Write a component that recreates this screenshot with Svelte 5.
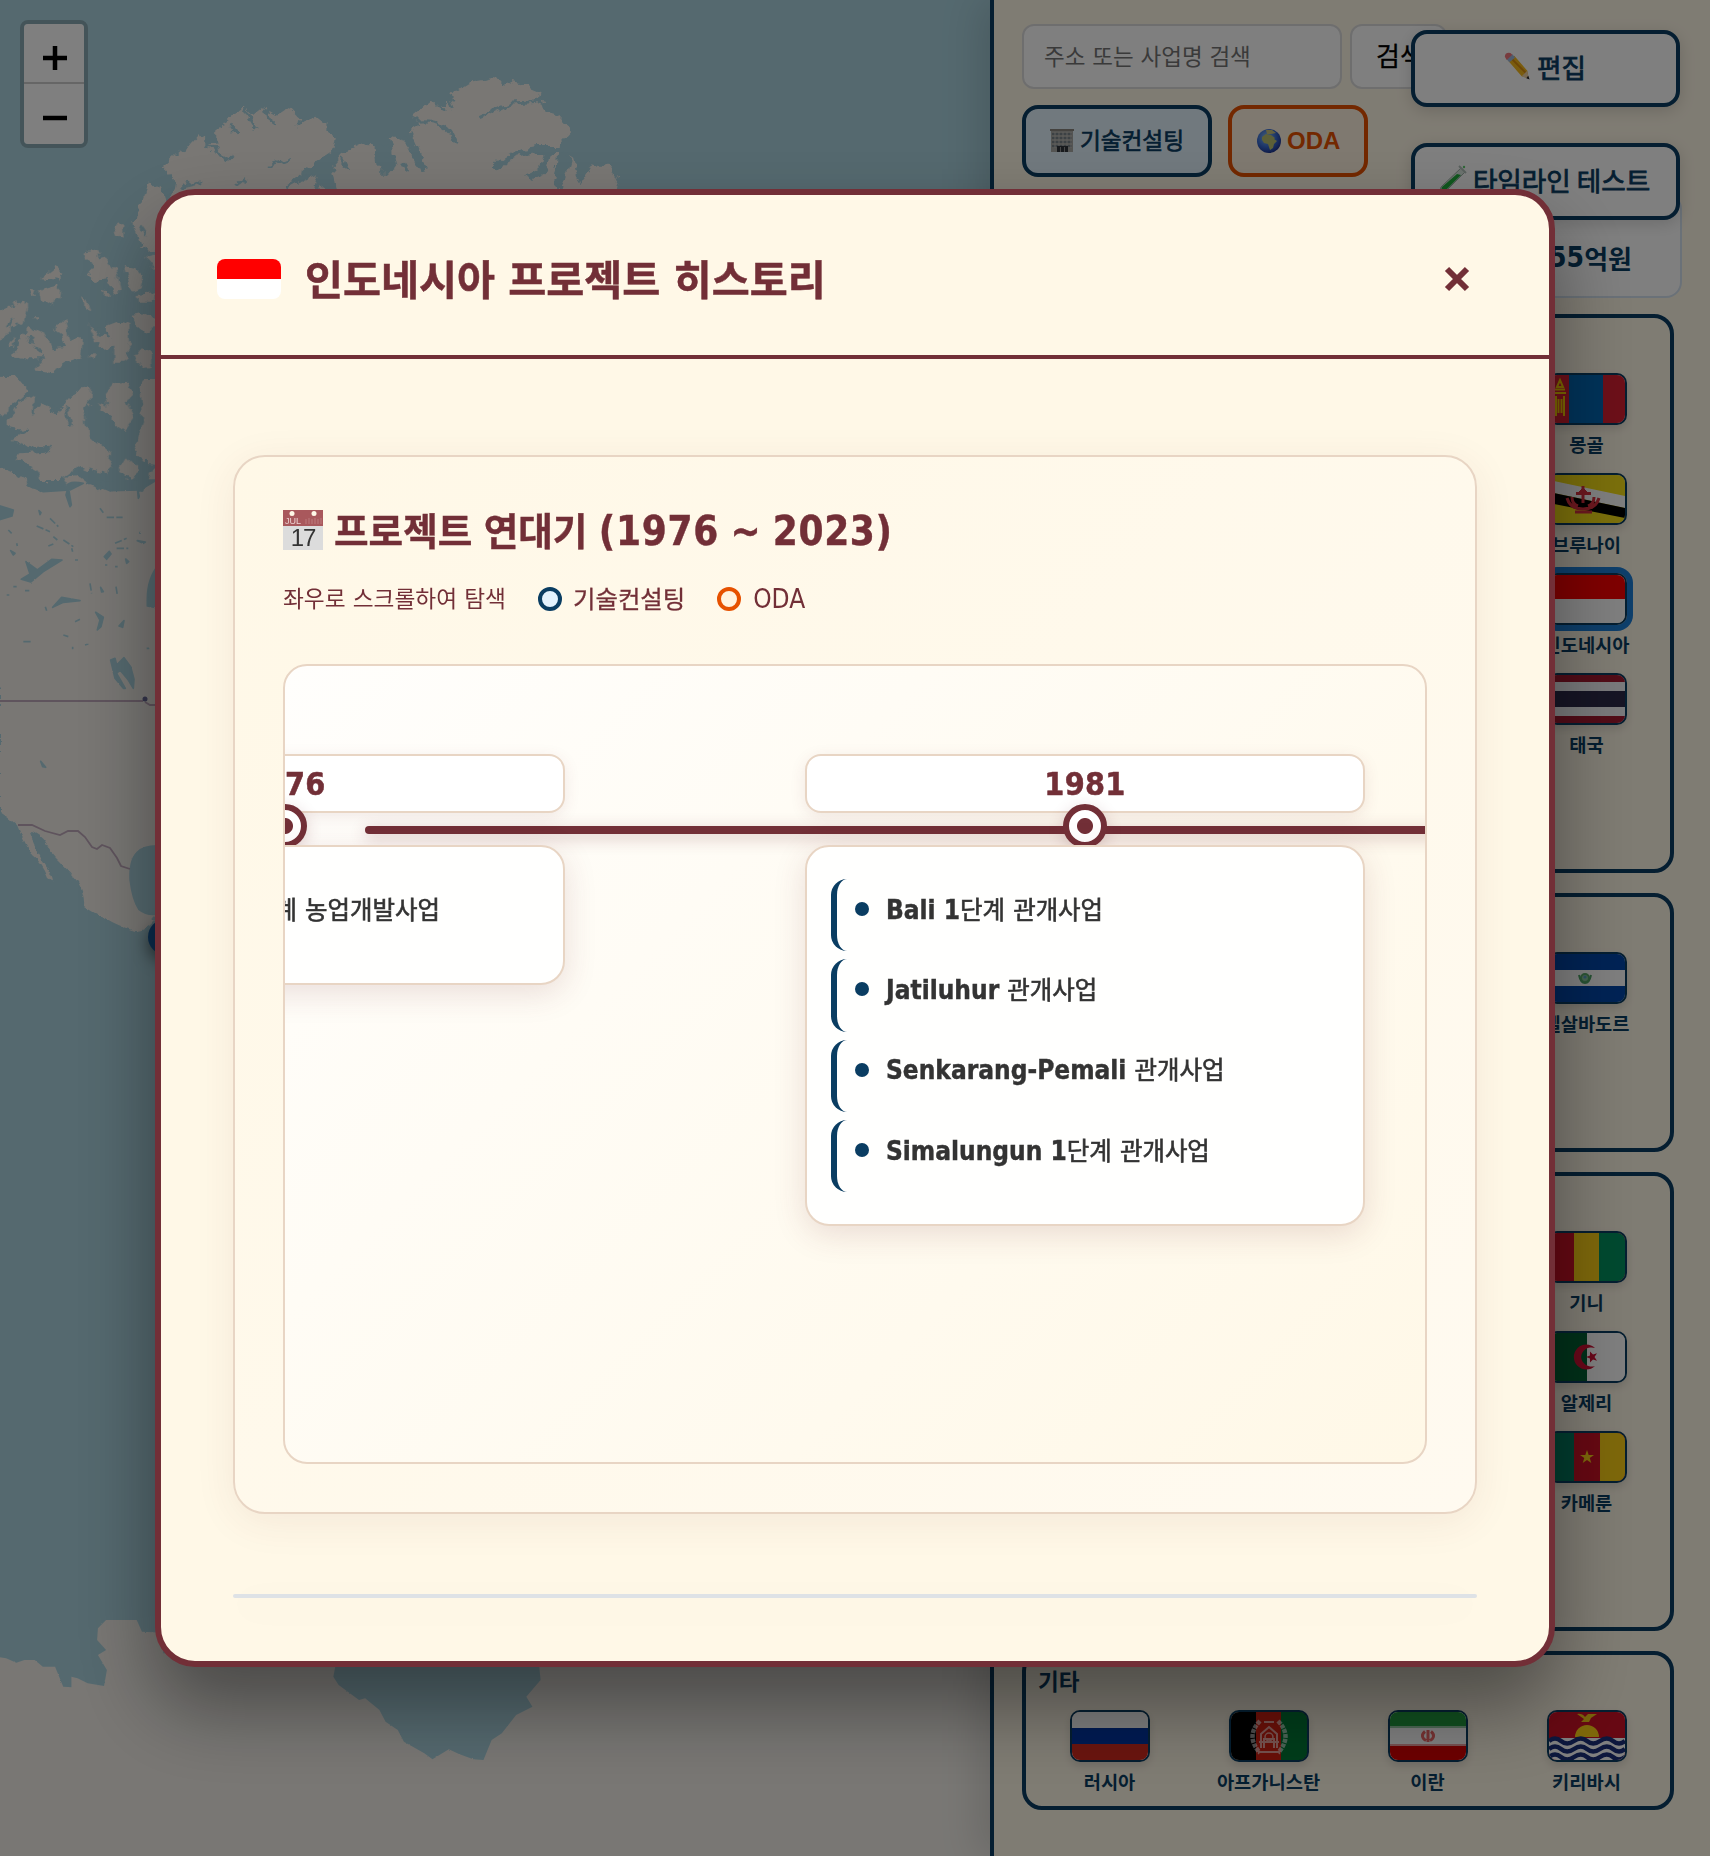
<script>
  const regions = [
    {
      rows: 5,
      flags: [
        { id: 'mn', name: '몽골' },
        { id: 'bn', name: '브루나이' },
        { id: 'id', name: '인도네시아', selected: true },
        { id: 'th', name: '태국' }
      ]
    },
    { rows: 2, flags: [{ id: 'sv', name: '엘살바도르' }] },
    {
      rows: 4,
      flags: [
        { id: 'gn', name: '기니' },
        { id: 'dz', name: '알제리' },
        { id: 'cm', name: '카메룬' }
      ]
    },
    {
      title: '기타',
      rows: 1,
      wide: true,
      flags: [
        { id: 'ru', name: '러시아' },
        { id: 'af', name: '아프가니스탄' },
        { id: 'ir', name: '이란' },
        { id: 'ki', name: '키리바시' }
      ]
    }
  ];

  const years = [
    { year: '1976', partial: true, projects: ['1단계 농업개발사업'] },
    {
      year: '1981',
      projects: [
        'Bali 1단계 관개사업',
        'Jatiluhur 관개사업',
        'Senkarang-Pemali 관개사업',
        'Simalungun 1단계 관개사업'
      ]
    }
  ];

  // Splits a label into Hangul and Latin runs so each can be sized on its own.
  const runs = (text) =>
    (text.match(/[가-힣]+|[^가-힣]+/g) ?? []).map((t) => ({ t, ko: /[가-힣]/.test(t) }));
</script>

{#snippet mixed(text)}<span class="mixed">{#each runs(text) as r}<span class={r.ko ? 'ko' : 'la'}>{r.t}</span>{/each}</span>{/snippet}

{#snippet flag(id)}
  <svg viewBox="0 0 76 48" preserveAspectRatio="none">
    {#if id === 'mn'}
      <rect width="76" height="48" fill="#da2032" /><rect x="20" width="34" height="48" fill="#0066b3" />
      <path d="M7 21v20M15 21v20M9.500 24v14M12.500 24v14M5 18h12M8 12l3-7 3 7zM6 14.500h10" stroke="#f9cf02" stroke-width="2" fill="none" />
    {:else if id === 'bn'}
      <rect width="76" height="48" fill="#f7e017" />
      <path d="M0 5 76 21v12L0 17z" fill="#fff" /><path d="M0 17 76 33v10L0 28z" fill="#000" />
      <g stroke="#d8303e" fill="none"><path d="M34 11v17M27 18.500h15" stroke-width="3" /><path d="M30 17l4-4 4 4z" fill="#d8303e" /><path d="M18 23q3 11 16 11t16-11M23 22q0 7 6 9M45 22q0 7-6 9" stroke-width="3" /><path d="M26 37h17" stroke-width="3" /></g>
    {:else if id === 'id'}
      <rect width="76" height="48" fill="#fff" /><rect width="76" height="24" fill="#f00" />
    {:else if id === 'th'}
      <rect width="76" height="48" fill="#a51931" /><rect y="7" width="76" height="34" fill="#f4f5f8" /><rect y="16" width="76" height="16" fill="#2d2a4a" />
    {:else if id === 'sv'}
      <rect width="76" height="48" fill="#0047ab" /><rect y="16" width="76" height="16" fill="#fff" />
      <circle cx="36" cy="24" r="4" fill="#8cc8a0" stroke="#5aa96a" stroke-width="2" /><path d="M30 21c1 5 3 8 6 8s5-3 6-8" stroke="#4fa568" stroke-width="2" fill="none" /><circle cx="36" cy="23" r="1.600" fill="#5e9dc8" />
    {:else if id === 'gn'}
      <rect width="76" height="48" fill="#ce1126" /><rect x="25" width="26" height="48" fill="#fcd116" /><rect x="50" width="26" height="48" fill="#009460" />
    {:else if id === 'dz'}
      <rect width="76" height="48" fill="#fff" /><rect width="38" height="48" fill="#006233" />
      <path d="M47 15a12.500 12.500 0 1 0 0 18a10.500 9.500 0 1 1 0-18z" fill="#d21034" transform="translate(-1 0)" /><path d="m37 24 4-1.500 0-4 3 3 4-1.200-2.500 3.700 2.500 3.700-4-1.200-3 3 0-4z" fill="#d21034" />
    {:else if id === 'cm'}
      <rect width="76" height="48" fill="#ce1126" /><rect width="25" height="48" fill="#007a5e" /><rect x="51" width="25" height="48" fill="#fcd116" />
      <path d="m38 17 1.700 5h5.300l-4.300 3.100 1.600 5-4.300-3-4.300 3 1.600-5-4.300-3.100h5.300z" fill="#fcd116" />
    {:else if id === 'ru'}
      <rect width="76" height="48" fill="#fff" /><rect y="16" width="76" height="16" fill="#0036a7" /><rect y="32" width="76" height="16" fill="#d52b1e" />
    {:else if id === 'af'}
      <rect width="76" height="48" fill="#000" /><rect x="25" width="26" height="48" fill="#d32011" /><rect x="50" width="26" height="48" fill="#007a36" />
      <g fill="none" stroke="#fff" opacity=".6"><path d="M29 9Q14 24 29 41M47 9Q62 24 47 41" stroke-width="4.500" stroke-dasharray="4 1" /><path d="M30 36V22l8-7 8 7v14M28 30h20M33 36v-9h10v9M27 40h22M33 10h10" stroke-width="2" /><circle cx="38" cy="25" r="4" stroke-width="1.500" /></g>
    {:else if id === 'ir'}
      <rect width="76" height="48" fill="#fff" /><rect width="76" height="14" fill="#239f40" /><rect y="34" width="76" height="14" fill="#da0000" />
      <path d="M0 15h76" stroke="#9ccfa8" stroke-width="2" /><path d="M0 33h76" stroke="#f0a0a0" stroke-width="2" />
      <path d="M38 18v12M35 19.500c-4 3-3 7 1 9M41 19.500c4 3 3 7-1 9" stroke="#e66" stroke-width="3" fill="none" />
    {:else if id === 'ki'}
      <rect width="76" height="48" fill="#ce1126" /><rect y="26" width="76" height="22" fill="#fff" />
      <path d="M26 25a12 12 0 0 1 24 0z" fill="#fcd116" /><path d="M28 2q5-1 8 3l3-3h9l-6 4-2 4h-8l3-3z" fill="#f0c416" />
      <path d="M0 29q6-5 12 0t13 0 13 0 13 0 13 0 12 0M0 37q6-5 12 0t13 0 13 0 13 0 13 0 12 0M0 45q6-5 12 0t13 0 13 0 13 0 13 0 12 0" stroke="#1a2f7a" stroke-width="4.500" fill="none" />
    {/if}
  </svg>
{/snippet}

<div class="app">
  <div class="map">
    <svg class="tiles" viewBox="0 0 990 1856" width="990" height="1856">
      <defs>
        <filter id="coast" x="-5%" y="-5%" width="110%" height="110%">
          <feTurbulence type="fractalNoise" baseFrequency="0.1" numOctaves="3" seed="7" result="n" />
          <feDisplacementMap in="SourceGraphic" in2="n" scale="11" xChannelSelector="R" yChannelSelector="G" />
        </filter>
        <filter id="fine" x="-5%" y="-5%" width="110%" height="110%">
          <feTurbulence type="fractalNoise" baseFrequency="0.15" numOctaves="2" seed="3" result="n" />
          <feDisplacementMap in="SourceGraphic" in2="n" scale="5" xChannelSelector="R" yChannelSelector="G" />
        </filter>
      </defs>
      <rect width="990" height="1856" fill="#aad3df" />

      <!-- arctic islands and Greenland -->
      <g filter="url(#coast)">
        <g transform="scale(.408 .3333)">
          <path fill="#f2efe9" d="M395 500 440 450 465 440 490 405 505 435 530 430 530 395 545 365 600 325 620 345 645 320 680 345 710 320 745 365 775 350 800 375 800 400 825 410 820 450 770 490 700 560 780 520 765 590 420 600 430 540z" />
          <path fill="#f2efe9" d="M815 495 840 460 905 425 920 445 925 500 950 530 970 500 955 410 985 420 1040 510 1005 440 1000 395 1030 375 1010 350 1050 310 1090 310 1110 280 1150 250 1210 237 1280 255 1320 275 1315 300 1335 305 1340 340 1370 350 1400 390 1370 430 1360 570 1385 540 1405 455 1430 525 1450 490 1500 500 1515 540 1505 600 830 600z" />
          <path fill="#f2efe9" d="M365 540 395 560 405 600 380 750 345 740 330 680 335 640 350 600z" />
          <path fill="#f2efe9" d="M785 560 810 580 790 600zM280 675 300 670 300 710 290 700z" />
          <path fill="none" stroke="#aad3df" stroke-width="9" d="M600 330 630 390M655 320 665 370M560 370 580 400M500 430 570 480M725 380 755 350M660 500 715 475M700 560 780 505M440 560 490 545M580 560 605 535M840 470 855 510M920 445 925 500M1010 365Q1100 350 1115 430M1180 350 1250 310 1310 305 1335 290M1100 290 1110 330M1070 310 1090 330M940 430 965 500M985 490 1000 520" />
          <path fill="none" stroke="#aad3df" stroke-width="18" d="M1220 505Q1240 460 1320 450H1370M1340 450 1330 510 1295 530M1000 400 1040 510M1380 460 1365 567M1405 450 1425 530 1440 500" />
        </g>
        <g transform="translate(0 220) scale(.3333)" fill="#f2efe9">
          <path d="M340 15 360 8 368 50 352 40zM400 0H490V90L440 95 420 60zM445 110 480 100V150L455 145zM250 95 290 88 300 120 320 115 350 150 362 210 340 215 320 180 290 185 265 170 275 145zM375 135 405 140 430 170 425 205 400 215 385 190zM410 225 460 220 460 245 415 245zM120 175 165 140 188 160 180 180zM120 210 178 195 175 235 150 255 125 240zM90 205 112 210 105 228zM245 222 260 235 274 275 258 265zM303 212 328 218 318 228zM95 292 115 292 108 304z" />
          <path d="M-10 280 30 255 65 245 82 260 70 310 50 320 35 325 0 365-10 360zM18 385 45 350 38 380zM45 405 60 345 90 320 130 340 155 385 200 380 185 340 165 325 195 295 205 345 215 370 235 350 252 360 245 415 200 430 150 460 100 450 135 415 80 415zM265 305 300 350 320 320 360 305 385 315 388 390 380 425 340 425 340 380 300 385zM400 285 430 278 465 300 468 330 430 335zM405 410 425 385 455 395 458 440 435 445zM262 400 282 400 275 418z" />
          <path d="M-10 470 45 472 82 518 20 570-10 600zM20 600 60 545 105 528 100 580 125 545 165 580 200 545 230 510 270 505 268 545 255 560 270 650 330 700 325 760 240 740 180 780 118 780 105 750 50 715 60 700 140 695 35 660 70 630 20 620zM300 550 325 560 318 515 340 490 385 485 398 520 380 545 405 590 370 640 345 600 305 575zM420 500 440 480H490V730L430 725 405 690 420 640 430 600zM355 755 380 715 415 750 400 775z" />
          <path d="M-10 740Q60 760 90 790L120 820 190 800 200 770 240 765 260 795 320 815 380 780 400 790 420 820 470 740 490 720V1400H-10z" />
          <path fill="none" stroke="#aad3df" stroke-width="10" d="M200 560 212 620M160 550 190 575M30 645 85 630M100 690 150 685M25 320 40 300M100 380 130 400M85 345 100 370M300 320 330 350M420 20 440 50" />
        </g>
      </g>

      <!-- mainland -->
      <path fill="#f2efe9" d="M0 600H200V1000H180V910Q170 918 150 915 130 905 128 880 128 855 148 845L155 843V913Q148 922 155 920 145 932 135 931 118 926 105 918 92 912 84 906 85 895 78 882 70 872 60 862 52 855 45 842 40 835 32 832 30 840 42 860 60 887 48 878 42 862 32 855 22 838 17 825 5 815 0 812z" filter="url(#fine)" />
      <g filter="url(#fine)" transform="translate(0 480) scale(.3333)" fill="#aad3df">
        <path stroke="#aad3df" stroke-width="5" stroke-linejoin="round" d="M90 18Q140 5 200 20 205 0 250 10L240 15 210 30 130 35zM265 5 420 0 470 0 420 30 330 32zM205 20 214 75 210 80 198 45zM-10 75 40 90 36 108-10 122zM64 298 90 282 78 245 112 270 155 238 186 240 130 275 92 306zM158 382 185 352 240 362 190 367zM313 230 328 214 333 222 320 238zM32 212 45 220 40 225zM332 540 345 535 350 555 372 533 392 560 402 598 400 625 385 600 360 570 350 580 376 625 370 625 345 595zM442 360Q442 290 480 250V385L442 378zM287 397 310 412 303 440 292 450 300 420zM357 438 372 422 368 442zM122 844 137 862 128 860zM412 22 418 50 415 55zM117 92 123 98 120 104zM302 322 310 335 305 336zM412 182 436 186 430 190zM377 237 386 245 380 250z" />
        <path fill="none" stroke="#aad3df" stroke-width="5" stroke-dasharray="22 7" d="M110 138 150 155M150 115 175 140M145 198 160 192M190 180 220 200M300 85 310 98M320 112 368 112M345 190 380 175M350 205H385M25 150 35 160M70 485H95M190 465 205 470M225 425 240 418M255 495 265 492M270 310 275 340M348 320 352 345M160 170 172 180M50 190 52 198M215 205 218 215M315 255H322M420 155V162M345 260H353M225 240H234M440 505H448M40 320H50M75 332H88M20 345H28M218 500V508M136 380 140 392" />
        <path fill="#aad3df" d="M470 1095Q430 1095 410 1115 385 1140 388 1200 395 1260 415 1290 440 1310 470 1305zM90 1058 115 1065 130 1105 185 1160 225 1200 200 1215 150 1160 130 1140 110 1110z" />
      </g>
      <path fill="none" stroke="#bfa8bb" stroke-width="1.800" d="M0 701H143M18 825 32 825 45 831 60 835 68 831 78 831 85 837 92 847 97 849 102 845 110 848 117 858 121 866 130 869M145 702 150 705H157" />
      <circle cx="145" cy="699" r="2.500" fill="#6a6a98" />
      <circle class="pin" cx="166" cy="937" r="18" fill="#15589a" />

      <!-- Antarctica -->
      <g filter="url(#fine)" transform="translate(0 1560) scale(.408 .3333)">
        <path fill="#f2efe9" d="M-10 290 15 295 40 308 60 300 85 300 105 320 135 320 155 380 175 382 175 350 190 355 215 370 255 378 262 330 240 285 260 270 238 240 240 205 260 180 335 180 348 215 400 218V280H2450V900H-10z" />
        <path fill="#aad3df" d="M825 300H1320L1325 360 1290 410 1305 440 1265 465 1230 520 1205 540 1185 600 1160 598 1125 582 1100 568 1060 598 1040 580 990 545 975 510 945 485 930 450 895 415 880 420 830 375 817 350z" />
      </g>
    </svg>
    <div class="zoom-control">
      <button aria-label="확대"><svg viewBox="0 0 24 24"><path d="M0 12h24M12 0v24" /></svg></button>
      <button aria-label="축소"><svg viewBox="0 0 24 24"><path d="M0 12h24" /></svg></button>
    </div>
  </div>

  <aside class="sidebar">
    <div class="search">
      <div class="field">주소 또는 사업명 검색</div>
      <div class="search-btn">검색</div>
    </div>
    <div class="filters">
      <div class="filter tech">
        <svg class="emoji" viewBox="0 0 24 24"><rect x="1" y="1" width="22" height="23" fill="#a8a8a4" /><path d="M0 2h24" stroke="#88857e" stroke-width="2" /><path d="M2 6h20M2 10h20M2 14h20M2 18h20" stroke="#69757f" stroke-width="1.600" /><path d="M5 4v16M9 4v16M13 4v16M17 4v16M21 4v16" stroke="#bcbcb8" stroke-width="1" /><path d="M7 18h11v6H7z" fill="#30343a" /><path d="M10.500 19v5M14.500 19v5" stroke="#8e8e8e" /></svg>
        <span>기술컨설팅</span>
      </div>
      <div class="filter oda">
        <svg class="emoji" viewBox="0 0 24 24"><defs><radialGradient id="sea" cx=".4" cy=".35" r=".7"><stop offset="0" stop-color="#86bdf5" /><stop offset=".6" stop-color="#3566cc" /><stop offset="1" stop-color="#1c2e86" /></radialGradient></defs><circle cx="12" cy="12" r="12" fill="url(#sea)" /><path d="M5 8l4-3 5 1 4 3-1 1 3 2-3 3-1 4-3 2-2-6-4-1-2-3z" fill="#b9bf6e" /><path d="M9 1l6 0 4 3-5 1-4 0z" fill="#c9c27c" /></svg>
        <span>ODA</span>
      </div>
    </div>
    <div class="stat"><b>55</b>억원</div>

    {#each regions as region}
      <section class="region">
        <h3>{region.title ?? ''}</h3>
        <div class="grid rows-{region.rows}" class:wide={region.wide}>
          {#each region.flags as f}
            <div class="country" class:selected={f.selected}>
              <div class="flag">{@render flag(f.id)}</div>
              <span>{f.name}</span>
            </div>
          {/each}
        </div>
      </section>
    {/each}
  </aside>

  <div class="floating">
    <button>
      <svg class="emoji pencil" viewBox="0 0 28 30"><path d="M5 10 11 4 25 20 26 28 19 26z" fill="#f5b81c" /><path d="M8 7 25 24" stroke="#d98c10" stroke-width="2" /><path d="M19 26l6-6 2 9z" fill="#f0d2a4" /><path d="M24 28l2-2.500 1.500 4z" fill="#222" /><path d="M3 8 9 2.500 12 6 6 11z" fill="#9db8dc" /><path d="M1 5Q1 0 7 1L9 3 3 8.500z" fill="#f0777c" /></svg>
      <span>편집</span>
    </button>
    <button>
      <svg class="emoji tube" viewBox="0 0 28 28"><path d="M22 3 26 7 7 26q-4 2-5 0t0-4z" fill="#d9e6de" stroke="#9fb0a8" /><path d="M18 9 22 10 7 25q-3 2-4 0t0-3z" fill="#1fae3c" /><path d="M20 1l7 7" stroke="#b4c2bc" stroke-width="2" /><circle cx="25" cy="2" r="1.200" fill="#5fd070" /></svg>
      <span>타임라인 테스트</span>
    </button>
  </div>

  <div class="overlay">
    <div class="modal">
      <header>
        <div class="head-flag">{@render flag('id')}</div>
        <h1>인도네시아 프로젝트 히스토리</h1>
        <svg class="close" viewBox="0 0 26 26"><path d="M3 3 23 23M23 3 3 23" /></svg>
      </header>
      <div class="body">
        <section class="chronicle">
          <h2>
            <svg class="calendar" viewBox="0 0 40 40"><rect width="40" height="40" fill="#dcdcdc" /><rect width="40" height="16" fill="#a9585c" /><circle cx="9" cy="3.500" r="2.500" fill="#fff8e7" /><circle cx="31" cy="3.500" r="2.500" fill="#fff8e7" /><path d="M23 9v5M26 8v6M29 9v5M32 8v6M35 9v5M38 8v6" stroke="#bc7a7c" /><text x="2" y="14" class="cal-month">JUL</text><text x="20" y="36" class="cal-day">17</text></svg>
            {@render mixed('프로젝트 연대기 (1976 ~ 2023)')}
          </h2>
          <div class="legend">
            <span class="hint">좌우로 스크롤하여 탐색</span>
            <span class="key"><i class="ring tech"></i><span class="name">기술컨설팅</span></span>
            <span class="key"><i class="ring oda"></i><span class="name latin">ODA</span></span>
          </div>
          <div class="timeline">
            <div class="track">
              <div class="line"></div>
              {#each years as y}
                <div class="entry">
                  <div class="year">{y.year}</div>
                  <div class="dot"></div>
                  <div class="card">
                    {#each y.projects as p}
                      <div class="project">
                        <i></i>
                        <span class="label" class:partial={y.partial}>{@render mixed(p)}</span>
                      </div>
                    {/each}
                  </div>
                </div>
              {/each}
            </div>
          </div>
        </section>
        <div class="divider"></div>
      </div>
    </div>
  </div>
</div>

<style>
  :global(body) {
    overflow: hidden;
  }
  .app {
    position: relative;
    display: flex;
    width: 1710px;
    height: 1856px;
    overflow: hidden;
    font-family: 'DejaVu Sans Condensed', 'Noto Sans CJK KR', sans-serif;
    color: #0a3d62;
  }
  .app :global(*),
  .app {
    box-sizing: border-box;
  }
  svg {
    display: block;
    flex: none;
  }
  button {
    font: inherit;
    color: inherit;
    margin: 0;
    padding: 0;
    border: 0;
  }

  /* map */
  .map {
    position: relative;
    width: 990px;
    flex: none;
  }
  .pin {
    filter: drop-shadow(0 6px 8px rgba(0, 0, 0, 0.5));
  }
  .zoom-control {
    position: absolute;
    left: 20px;
    top: 20px;
    width: 68px;
    border: 4px solid rgba(0, 0, 0, 0.2);
    border-radius: 8px;
    background-clip: padding-box;
  }
  .zoom-control button {
    display: flex;
    align-items: center;
    justify-content: center;
    width: 60px;
    height: 60px;
    background: #fff;
    border-radius: 0 0 4px 4px;
    padding-left: 2px;
  }
  .zoom-control button:first-child {
    border-bottom: 2px solid #ccc;
    border-radius: 4px 4px 0 0;
    padding-top: 10px;
  }
  .zoom-control button:last-child {
    padding-top: 8px;
  }
  .zoom-control svg {
    width: 24px;
    height: 24px;
    stroke: #000;
    stroke-width: 4.5;
  }

  /* sidebar */
  .sidebar {
    position: relative;
    width: 720px;
    padding: 24px 28px;
    border-left: 4px solid #0a3d62;
    background: #fff8e7;
    box-shadow: -8px 0 40px rgba(0, 0, 0, 0.15);
    font-family: 'Noto Sans CJK KR', sans-serif;
  }
  .search {
    display: flex;
    gap: 8px;
    height: 65px;
  }
  .field,
  .search-btn {
    display: flex;
    align-items: center;
    border: 2px solid #ddd;
    border-radius: 12px;
    background: #fff;
    padding-bottom: 4px;
  }
  .field {
    width: 320px;
    padding-left: 20px;
    font-size: 22.5px;
    word-spacing: 1.8px;
    color: #757575;
  }
  .search-btn {
    width: 97px;
    padding-left: 24px;
    font-size: 26px;
    color: #000;
    -webkit-text-stroke: 0.3px #000;
  }
  .filters {
    display: flex;
    gap: 16px;
    height: 72px;
    margin-top: 16px;
  }
  .filter {
    display: flex;
    align-items: center;
    gap: 6px;
    padding: 0 24px 2px;
    border: 4px solid #0a3d62;
    border-radius: 16px;
    background: #e3f2fd;
    font-size: 22.6px;
    -webkit-text-stroke: 0.7px currentColor;
    white-space: nowrap;
  }
  .filter.tech span {
    margin-top: -2px;
  }
  .filter.tech {
    width: 190px;
  }
  .filter.oda {
    width: 140px;
    padding: 0 20px 0 25px;
    border-color: #e65100;
    background: #fff3e0;
    color: #e65100;
    font: bold 24px 'Liberation Sans', sans-serif;
    -webkit-text-stroke: 0;
  }
  .filter .emoji {
    width: 24px;
    height: 24px;
  }
  .stat {
    display: flex;
    align-items: center;
    justify-content: flex-end;
    height: 105px;
    margin: 16px 0 16px;
    padding: 24px 48px 0 0;
    border: 2px solid #d5e3f0;
    border-radius: 16px;
    background: #fff;
    font-size: 26px;
    font-weight: 700;
  }
  .stat b {
    font-family: 'DejaVu Sans Condensed', sans-serif;
    font-size: 28px;
  }
  .region {
    width: 652px;
    margin-bottom: 20px;
    padding: 12px;
    border: 4px solid #0a3d62;
    border-radius: 20px;
  }
  .region h3 {
    height: 43px;
    margin: 0;
    font-size: 22.5px;
    line-height: 27px;
    font-weight: 700;
  }
  .grid {
    display: grid;
    grid-template-columns: repeat(4, 143px);
    grid-auto-rows: 84px;
    gap: 16px;
  }
  .rows-5 {
    height: 484px;
  }
  .rows-4 {
    height: 384px;
  }
  .rows-2 {
    height: 184px;
  }
  .rows-1 {
    height: 84px;
  }
  .grid:not(.wide) .country {
    grid-column: 4;
  }
  .country {
    display: flex;
    flex-direction: column;
    align-items: center;
    gap: 7px;
    font-size: 18.7px;
    line-height: 24px;
    font-weight: 700;
    white-space: nowrap;
  }
  .flag {
    width: 80px;
    height: 52px;
    border: 2px solid #0a3d62;
    border-radius: 10px;
    overflow: hidden;
    box-shadow: 0 4px 8px rgba(0, 0, 0, 0.12);
  }
  .flag svg,
  .head-flag svg {
    width: 100%;
    height: 100%;
  }
  .selected .flag {
    box-shadow: 0 0 0 6px #1c7ed6;
  }

  /* floating buttons */
  .floating {
    position: absolute;
    top: 30px;
    right: 30px;
    display: flex;
    flex-direction: column;
    gap: 36px;
    width: 269px;
    font-family: 'Noto Sans CJK KR', sans-serif;
  }
  .floating button {
    display: flex;
    align-items: center;
    justify-content: center;
    gap: 6px;
    height: 77px;
    padding: 0 2px 5px 0;
    border: 4px solid #0a3d62;
    border-radius: 16px;
    background: #fff;
    box-shadow: 0 4px 16px rgba(0, 0, 0, 0.15);
    font-size: 26.6px;
    -webkit-text-stroke: 0.8px currentColor;
  }
  .pencil {
    width: 28px;
    height: 28px;
  }
  .tube {
    width: 28px;
    height: 28px;
  }

  /* modal */
  .overlay {
    position: absolute;
    inset: 0;
    display: flex;
    align-items: center;
    justify-content: center;
    background: rgba(0, 0, 0, 0.5);
  }
  .modal {
    width: 1400px;
    height: 1478px;
    border: 6px solid #722f37;
    border-radius: 40px;
    background: #fff8e7;
    color: #722f37;
    box-shadow: 0 40px 80px rgba(0, 0, 0, 0.4);
  }
  header {
    display: flex;
    align-items: center;
    height: 164px;
    padding: 7px 79px 0 56px;
    border-bottom: 4px solid #722f37;
  }
  .head-flag {
    width: 64px;
    height: 40px;
    border-radius: 8px;
    overflow: hidden;
    margin-right: 24px;
  }
  h1 {
    flex: 1;
    margin: -4px 0 0;
    font: 700 41.3px/56px 'Noto Sans CJK KR', sans-serif;
    white-space: pre;
    word-spacing: 4px;
    -webkit-text-stroke: 0.5px currentColor;
  }
  .close {
    width: 26px;
    height: 26px;
    stroke: #722f37;
    stroke-width: 6;
  }
  .body {
    padding: 96px 72px 0;
  }
  .chronicle {
    height: 1059px;
    padding: 48px;
    border: 2px solid #e8d5c4;
    border-radius: 32px;
    background: linear-gradient(135deg, #fff8e7, #fffaf0);
    box-shadow: 0 8px 40px rgba(114, 47, 55, 0.08);
  }
  h2 {
    display: flex;
    align-items: center;
    gap: 11px;
    height: 50px;
    margin: 0;
    font-size: 40px;
    font-weight: 700;
    letter-spacing: 0.7px;
    word-spacing: -1.8px;
    -webkit-text-stroke: 0.4px currentColor;
  }
  h2 .mixed {
    margin-top: -4px;
  }
  .calendar {
    width: 40px;
    height: 40px;
    -webkit-text-stroke: 0;
  }
  .cal-month {
    font: 9px 'Liberation Sans', sans-serif;
    fill: #ecd0d0;
    letter-spacing: 0;
  }
  .cal-day {
    font: 24px 'Liberation Sans', sans-serif;
    fill: #333;
    text-anchor: middle;
    letter-spacing: -1px;
  }
  .mixed {
    white-space: pre;
  }
  .ko {
    font-family: 'Noto Sans CJK KR', sans-serif;
    font-size: 0.94em;
    letter-spacing: 0;
  }
  .legend {
    display: flex;
    align-items: center;
    gap: 32px;
    height: 40px;
    margin-top: 24px;
    font-size: 24.400px;
    font-family: 'Noto Sans CJK KR', sans-serif;
  }
  .hint {
    font-size: 22.700px;
    white-space: nowrap;
    width: 223px;
    margin-top: -3px;
    word-spacing: 2px;
  }
  .key {
    display: flex;
    align-items: center;
    gap: 11px;
    -webkit-text-stroke: 0.300px currentColor;
  }
  .name {
    margin-top: -3px;
  }
  .name.latin {
    margin: 0 0 0 1px;
    font: 26px 'DejaVu Sans Condensed', sans-serif;
    -webkit-text-stroke: 0;
  }
  .ring {
    width: 24px;
    height: 24px;
    border: 4px solid #0a3d62;
    border-radius: 50%;
    background: #e3f2fd;
  }
  .ring.oda {
    border-color: #e65100;
    background: #fff3e0;
  }
  .timeline {
    height: 800px;
    margin-top: 45px;
    border: 2px solid #e8d5c4;
    border-radius: 24px;
    overflow: hidden;
    background: linear-gradient(135deg, #fffefc, #fff8e7);
  }
  .track {
    position: relative;
    display: flex;
    gap: 240px;
    width: 1360px;
    margin-left: -280px;
    padding-top: 88px;
  }
  .line {
    position: absolute;
    left: 360px;
    top: 160px;
    width: 1200px;
    height: 8px;
    border-radius: 4px;
    background: #722f37;
    box-shadow: 0 4px 16px rgba(114, 47, 55, 0.3);
  }
  .entry {
    position: relative;
    width: 560px;
    flex: none;
  }
  .year {
    display: flex;
    align-items: center;
    justify-content: center;
    height: 59px;
    border: 2px solid #e8d5c4;
    border-radius: 16px;
    background: #fff;
    font-size: 32px;
    font-weight: 700;
    letter-spacing: 0.3px;
    -webkit-text-stroke: 0.5px currentColor;
    box-shadow: 0 4px 16px rgba(114, 47, 55, 0.1);
  }
  .dot {
    position: absolute;
    left: 258px;
    top: 50px;
    width: 44px;
    height: 44px;
    border: 6px solid #722f37;
    border-radius: 50%;
    background: radial-gradient(circle, #722f37 7.5px, #fff 8.500px);
    box-shadow: 0 4px 16px rgba(114, 47, 55, 0.2);
  }
  .card {
    position: relative;
    display: flex;
    flex-direction: column;
    gap: 8px;
    margin-top: 32px;
    padding: 32px 24px;
    border: 2px solid #e8d5c4;
    border-radius: 24px;
    background: #fffffe;
    box-shadow: 0 8px 32px rgba(114, 47, 55, 0.15);
    color: #333;
  }
  .project {
    display: flex;
    align-items: center;
    gap: 17px;
    height: 72.300px;
    padding: 0 0 12px 18px;
    border-left: 6px solid #0a3d62;
    border-radius: 16px;
    font-size: 26px;
    font-weight: 700;
  }
  .project i {
    width: 14px;
    height: 14px;
    border-radius: 50%;
    background: #0a3d62;
  }
  .label {
    margin-top: -2px;
  }
  .project .la {
    -webkit-text-stroke: 0.400px currentColor;
  }
  .project .ko {
    font-weight: 400;
    -webkit-text-stroke: 0.600px currentColor;
  }
  .partial {
    width: 354px;
    text-align: right;
  }
  .divider {
    height: 4px;
    margin-top: 80px;
    border-radius: 2px;
    background: #dee2e6;
    box-shadow: 0 8px 40px rgba(114, 47, 55, 0.08);
  }
</style>
